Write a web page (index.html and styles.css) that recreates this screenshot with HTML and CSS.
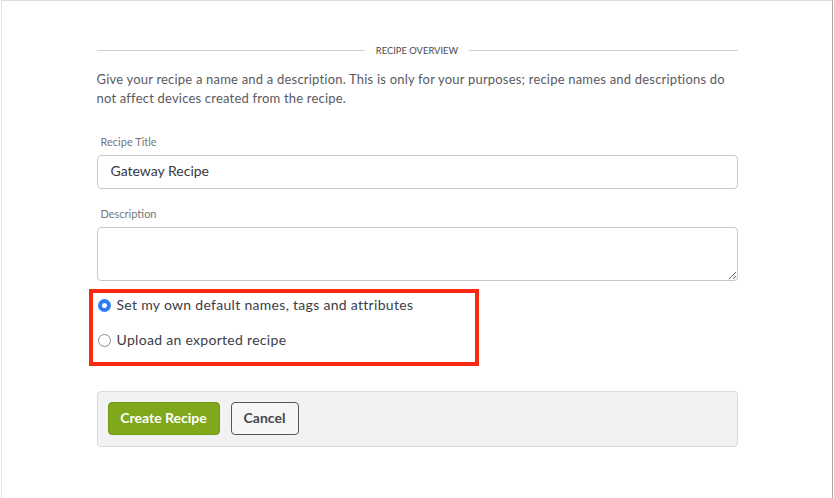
FILE: index.html
```html
<!DOCTYPE html>
<html lang="en">
<head>
<meta charset="utf-8">
<title>Recipe Overview</title>
<link rel="stylesheet" href="styles.css">
</head>
<body>
<div class="page">
  <div class="form">
    <div class="section-title">
      <span class="rule"></span>
      <span class="section-text">RECIPE OVERVIEW</span>
      <span class="rule"></span>
    </div>
    <p class="intro">Give your recipe a name and a description. This is only for your purposes; recipe names and descriptions do not affect devices created from the recipe.</p>

    <label class="field-label" for="title">Recipe Title</label>
    <input class="text-input" id="title" type="text" value="Gateway Recipe">

    <label class="field-label label-desc" for="desc">Description</label>
    <textarea class="text-area" id="desc"></textarea>

    <div class="choice-box">
      <label class="choice">
        <input class="radio" type="radio" name="mode" checked>
        <span>Set my own default names, tags and attributes</span>
      </label>
      <label class="choice">
        <input class="radio" type="radio" name="mode">
        <span>Upload an exported recipe</span>
      </label>
    </div>

    <div class="button-bar">
      <button class="btn btn-primary" type="button">Create Recipe</button>
      <button class="btn btn-secondary" type="button">Cancel</button>
    </div>
  </div>
</div>
</body>
</html>
```

FILE: styles.css
```css
html, body {
  margin: 0;
  padding: 0;
  background: #ffffff;
}

body {
  font-family: "Lato", "Liberation Sans", sans-serif;
  color: #444;
}

.page {
  box-sizing: border-box;
  height: 498px;
  margin-left: 1px;
  margin-right: 1px;
  border-top: 1px solid #dcdcde;
  border-left: 1px solid #e6e6e8;
  border-right: 1px solid #a9a9ab;
  padding-top: 42px;
}

.form {
  width: 641px;
  margin: 0 auto;
  display: flex;
  flex-direction: column;
}

.section-title {
  display: flex;
  align-items: center;
  gap: 11px;
  height: 14px;
}

.rule {
  flex: 1;
  height: 1px;
  background: #cfcfd2;
}

.section-text {
  font-size: 9.4px;
  color: #4a4a4f;
}

.intro {
  margin: 13px 0 0;
  font-size: 13px;
  letter-spacing: 0.2px;
  line-height: 19px;
  color: #5a5a60;
}

.field-label {
  margin-top: 26px;
  font-size: 11px;
  line-height: 16px;
  color: #76767b;
  padding-left: 4px;
}

.label-desc {
  margin-top: 17px;
}

.text-input,
.text-area {
  margin-top: 5px;
  box-sizing: border-box;
  width: 100%;
  border: 1px solid #c8c8cb;
  border-radius: 4px;
  font-family: "Lato", "Liberation Sans", sans-serif;
  font-size: 14px;
  color: #38383e;
  background: #fff;
  outline: none;
}

.text-input {
  height: 34px;
  padding: 0 12px 3px 13px;
}

.text-area {
  height: 54px;
  padding: 6px 12px;
  resize: vertical;
  display: block;
}

.choice-box {
  box-sizing: border-box;
  width: 390px;
  margin-top: 8px;
  margin-left: -8px;
  border: 4px solid #fa2912;
  padding: 0 5px 10px 5px;
  display: flex;
  flex-direction: column;
  gap: 11px;
}

.choice {
  display: flex;
  align-items: center;
  gap: 6px;
  height: 24px;
  font-size: 14px;
  letter-spacing: 0.3px;
  color: #3c3c46;
}

.choice span {
  margin-top: -2px;
}

.radio {
  appearance: none;
  -webkit-appearance: none;
  box-sizing: border-box;
  width: 13px;
  height: 13px;
  margin: 0;
  border-radius: 50%;
  border: 1px solid #8a8a8e;
  background: #fff;
  flex: none;
}

.radio:checked {
  border: 4px solid #2f7df6;
  background: #fff;
}

.button-bar {
  margin-top: 25px;
  box-sizing: border-box;
  height: 56px;
  background: #f2f2f4;
  border: 1px solid #dadadd;
  border-radius: 4px;
  padding: 10px;
  display: flex;
  align-items: flex-start;
  gap: 11px;
}

.btn {
  box-sizing: border-box;
  height: 33px;
  border-radius: 4px;
  font-family: "Lato", "Liberation Sans", sans-serif;
  font-size: 14px;
  font-weight: 700;
  cursor: pointer;
  padding: 0 0 2px;
}

.btn-primary {
  width: 112px;
  background: #7fa81b;
  border: 1px solid #739a17;
  color: #fff;
}

.btn-secondary {
  width: 68px;
  background: #f6f6f7;
  border: 1px solid #55555a;
  color: #46464c;
}
```
